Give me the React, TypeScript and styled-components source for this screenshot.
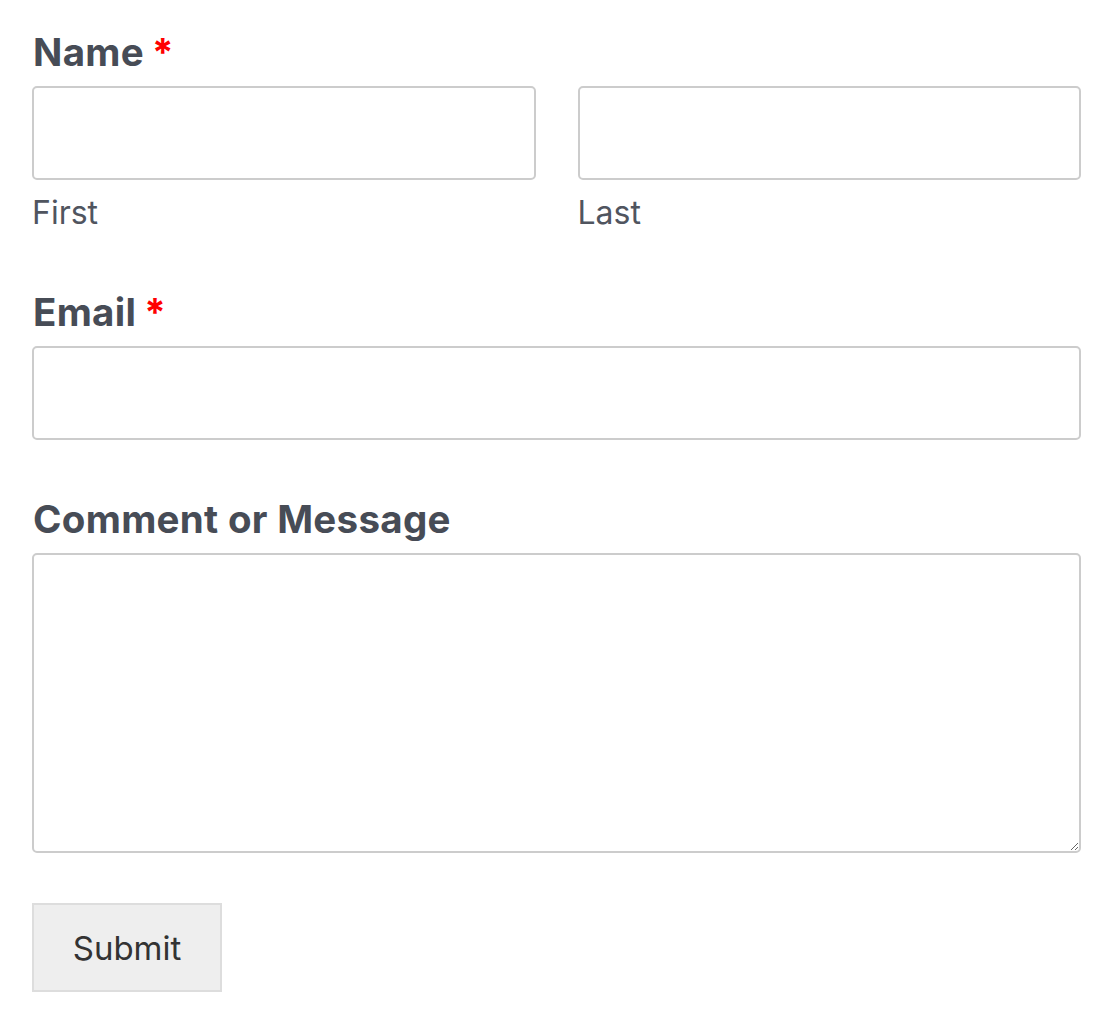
import React from "react";
import styled, { createGlobalStyle } from "styled-components";

const Global = createGlobalStyle`
  html, body { margin: 0; padding: 0; background: #fff; }
  body { font-family: Inter, "Liberation Sans", sans-serif; }
  * { box-sizing: border-box; }
`;

const Form = styled.form`
  padding: 30px 35px 40px 32px;
  display: flex;
  flex-direction: column;
`;

const Field = styled.div<{ $gap?: number }>`
  display: flex;
  flex-direction: column;
  margin-bottom: ${(p) => p.$gap ?? 0}px;
`;

const Label = styled.label`
  font-size: 38.5px;
  font-weight: 700;
  color: #474c56;
  line-height: 44px;
  margin-bottom: 12px;
  padding-left: 1px;
  letter-spacing: 0.3px;
`;

const Req = styled.span`
  color: #ff0000;
  font-weight: 700;
  margin-left: 8px;
`;

const Row = styled.div`
  display: grid;
  grid-template-columns: 1fr 1fr;
  column-gap: 42px;
`;

const Col = styled.div`
  display: flex;
  flex-direction: column;
`;

const Input = styled.input`
  height: 94px;
  width: 100%;
  border: 2px solid #cccccc;
  border-radius: 5px;
  background: #fff;
  font: inherit;
  font-size: 32px;
  padding: 0 20px;
`;

const Sub = styled.span`
  font-size: 32px;
  color: #50555f;
  line-height: 40px;
  margin-top: 13px;
`;

const TextArea = styled.textarea`
  height: 300px;
  width: 100%;
  border: 2px solid #cccccc;
  border-radius: 5px;
  font: inherit;
  font-size: 32px;
  padding: 20px;
`;

const Submit = styled.button`
  align-self: flex-start;
  width: 190px;
  height: 89px;
  background: #eeeeee;
  border: 2px solid #dddddd;
  border-radius: 0;
  color: #333333;
  font-family: inherit;
  font-size: 33px;
  font-weight: 400;
`;

export default function App() {
  return (
    <>
      <Global />
      <Form onSubmit={(e) => e.preventDefault()}>
        <Field $gap={57}>
          <Label>
            Name<Req>*</Req>
          </Label>
          <Row>
            <Col>
              <Input type="text" />
              <Sub>First</Sub>
            </Col>
            <Col>
              <Input type="text" />
              <Sub>Last</Sub>
            </Col>
          </Row>
        </Field>
        <Field $gap={57}>
          <Label>
            Email<Req>*</Req>
          </Label>
          <Input type="email" />
        </Field>
        <Field $gap={50}>
          <Label>Comment or Message</Label>
          <TextArea />
        </Field>
        <Submit type="submit">Submit</Submit>
      </Form>
    </>
  );
}
